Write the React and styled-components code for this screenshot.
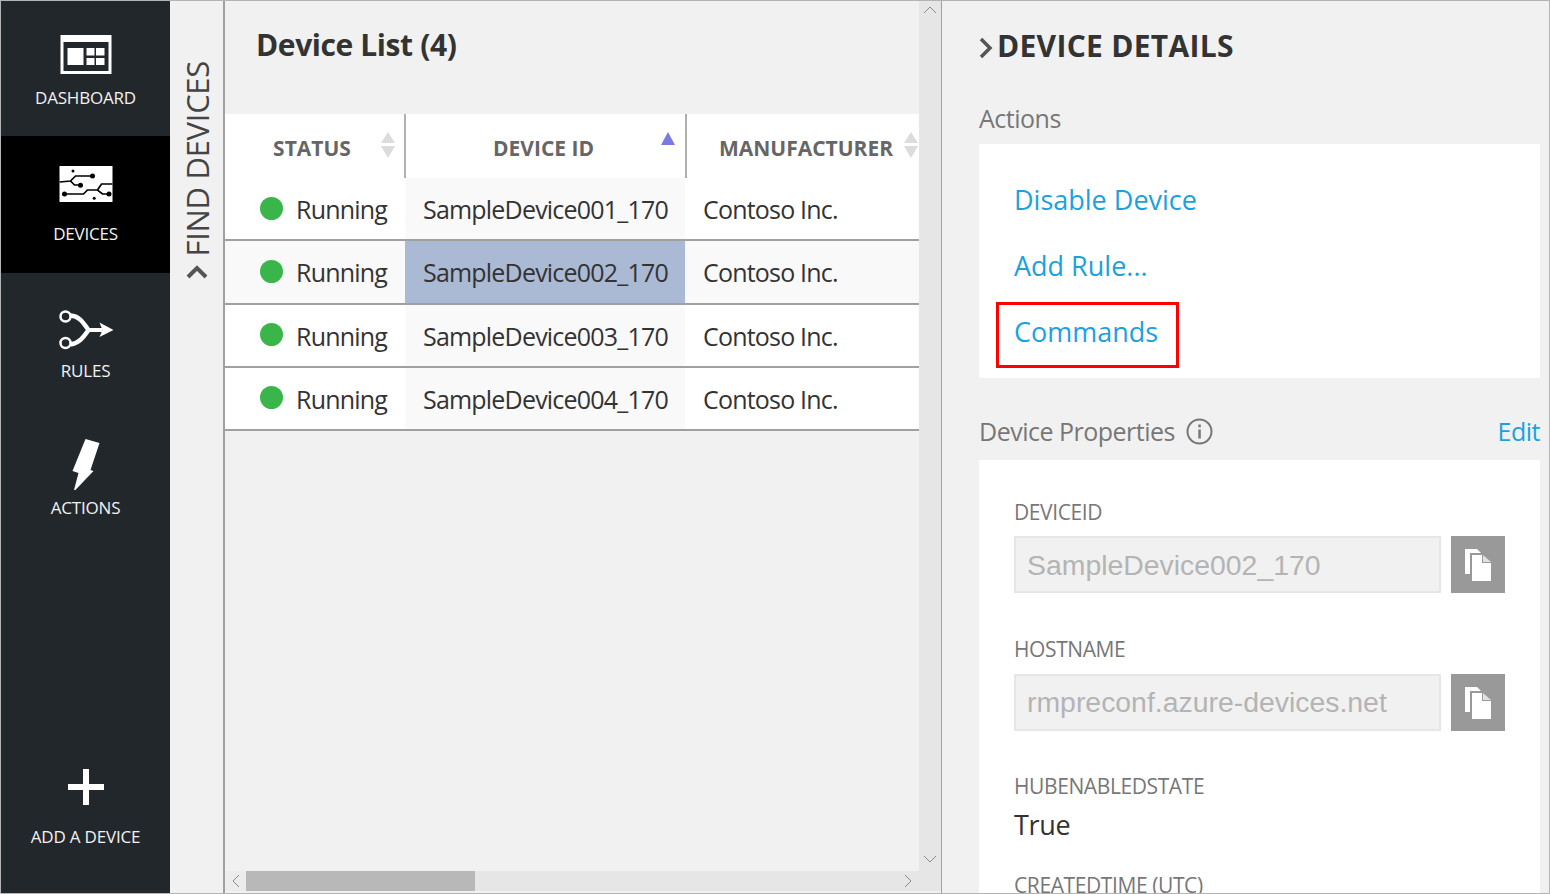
import React from 'react';
import styled, { createGlobalStyle } from 'styled-components';

const GlobalStyle = createGlobalStyle`
  html, body {
    margin: 0;
    padding: 0;
    background: #fff;
  }
  * {
    box-sizing: border-box;
  }
`;

const devices = ['001', '002', '003', '004'];

const DashboardIcon = () => (
  <NavSvg viewBox="55.5 20 60 60">
    <rect x="60" y="35" width="51" height="39" fill="#fff" />
    <rect x="63" y="42" width="45" height="29" fill="#22272b" />
    <rect x="67" y="48" width="16" height="17" fill="#fff" />
    <rect x="86" y="48" width="8" height="7.5" fill="#fff" />
    <rect x="95.5" y="48" width="8.5" height="7.5" fill="#fff" />
    <rect x="86" y="58" width="8" height="7" fill="#fff" />
    <rect x="95.5" y="58" width="8.5" height="7" fill="#fff" />
  </NavSvg>
);

const DevicesIcon = () => (
  <NavSvg viewBox="55.5 156 60 60">
    <rect x="59" y="166" width="53" height="36" fill="#fff" />
    <g fill="none" stroke="#000" strokeWidth="1.7">
      <path d="M92 176H75L70 181L59 182" />
      <path d="M70 181L74 185H80" />
      <path d="M64 194H83L87 190H97L102 194H109" />
      <path d="M97 190L101 184H112" />
    </g>
    <g fill="#000">
      <circle cx="72.500" cy="171" r="1.500" />
      <circle cx="92" cy="176" r="2.500" />
      <circle cx="80" cy="185.300" r="2.500" />
      <circle cx="64" cy="194" r="2.500" />
      <circle cx="108.500" cy="194" r="2.500" />
      <circle cx="93.700" cy="198.300" r="1.500" />
    </g>
  </NavSvg>
);

const RulesIcon = () => (
  <NavSvg viewBox="55.5 293 60 60">
    <g fill="none" stroke="#fff">
      <circle cx="65" cy="316.500" r="5" strokeWidth="2.500" />
      <circle cx="65" cy="343" r="5" strokeWidth="2.500" />
      <path d="M70 315.500C79 316 83 323 88 330C83 337 79 343 70 344.500" strokeWidth="4.500" />
      <path d="M86 330H102" strokeWidth="4" />
    </g>
    <path d="M99 322.500L113 330L99 337L102 330Z" fill="#fff" />
  </NavSvg>
);

const ActionsIcon = () => (
  <NavSvg viewBox="55.5 430 60 60">
    <path d="M85 439L99 443L90 470L93 471L73 492L78 473L72 471Z" fill="#fff" />
  </NavSvg>
);

const PlusIcon = () => (
  <PlusSvg viewBox="0 0 36 36">
    <path d="M15 0H21V15H36V21H21V36H15V21H0V15H15Z" fill="#fff" />
  </PlusSvg>
);

const CopyIcon = () => (
  <svg width="26" height="32" viewBox="0 0 26 32">
    <path d="M0 0H12L16 4H5V25H0Z" fill="#fff" />
    <path d="M7 6H17V14H26V32H7Z" fill="#fff" />
    <path d="M18 6L26 13H18Z" fill="#fff" opacity="0.7" />
  </svg>
);

const InfoIcon = () => (
  <svg width="27" height="27" viewBox="0 0 27 27">
    <circle cx="13.500" cy="13.500" r="12" fill="none" stroke="#777" strokeWidth="2" />
    <rect x="12.300" y="11.500" width="2.500" height="9" fill="#777" />
    <rect x="12.300" y="6.500" width="2.500" height="2.800" fill="#777" />
  </svg>
);

const SortArrows = ({ active, right }) =>
  active ? (
    <SortSvg $right={right} $top={18} viewBox="0 0 16 28" width="16" height="28">
      <path d="M8 0L15 13H1Z" fill="#7a7ae0" />
    </SortSvg>
  ) : (
    <SortSvg $right={right} $top={17} viewBox="0 0 16 28" width="16" height="28">
      <path d="M8 1L15 12H1Z" fill="#dcdcdc" />
      <path d="M8 27L15 15H1Z" fill="#dcdcdc" />
    </SortSvg>
  );

const Chevron = ({ d, w, h }) => (
  <svg width={w} height={h} viewBox={`0 0 ${w} ${h}`}>
    <path d={d} fill="none" stroke="#8a8a8a" strokeWidth="1" />
  </svg>
);

const App = () => {
  return (
    <Page>
      <GlobalStyle />
      <Sidebar>
        <NavItem>
          <DashboardIcon />
          <NavLabel>DASHBOARD</NavLabel>
        </NavItem>
        <NavItem $active>
          <DevicesIcon />
          <NavLabel>DEVICES</NavLabel>
        </NavItem>
        <NavItem>
          <RulesIcon />
          <NavLabel>RULES</NavLabel>
        </NavItem>
        <NavItem>
          <ActionsIcon />
          <NavLabel>ACTIONS</NavLabel>
        </NavItem>
        <AddDevice>
          <PlusIcon />
          <NavLabel>ADD A DEVICE</NavLabel>
        </AddDevice>
      </Sidebar>

      <FindPanel>
        <FindLabel>FIND DEVICES</FindLabel>
        <svg width="22" height="14" viewBox="0 0 22 14">
          <path d="M2 12L11 3L20 12" fill="none" stroke="#555" strokeWidth="4" />
        </svg>
      </FindPanel>

      <ListColumn>
        <ListBody>
          <ListTitle>Device List (4)</ListTitle>
          <HeaderRow>
            <HeaderCell $width={181} $shift={-5} $divider>
              STATUS
              <SortArrows right={8} />
            </HeaderCell>
            <HeaderCell $width={281} $shift={-4} $divider>
              DEVICE ID
              <SortArrows active right={9} />
            </HeaderCell>
            <HeaderCell $width={232} $shift={6}>
              MANUFACTURER
              <SortArrows right={0} />
            </HeaderCell>
          </HeaderRow>
          {devices.map((id, i) => (
            <Row key={id} $alt={i === 1}>
              <StatusCell>
                <Dot />
                Running
              </StatusCell>
              <IdCell $selected={i === 1}>SampleDevice{id}_170</IdCell>
              <MakerCell>Contoso Inc.</MakerCell>
            </Row>
          ))}
        </ListBody>
        <HScroll>
          <HButton>
            <Chevron w={8} h={14} d="M7 1L1 7L7 13" />
          </HButton>
          <HThumb />
          <HButtonEnd>
            <Chevron w={8} h={14} d="M1 1L7 7L1 13" />
          </HButtonEnd>
        </HScroll>
      </ListColumn>

      <VScroll>
        <Chevron w={14} h={8} d="M1 7L7 1L13 7" />
        <Chevron w={14} h={8} d="M1 1L7 7L13 1" />
      </VScroll>

      <Details>
        <DetailsTitle>
          <svg width="14" height="22" viewBox="0 0 14 22">
            <path d="M2 2L11 11L2 20" fill="none" stroke="#555" strokeWidth="3.500" />
          </svg>
          DEVICE DETAILS
        </DetailsTitle>
        <SectionLabel>Actions</SectionLabel>
        <ActionsCard>
          <ActionLink>Disable Device</ActionLink>
          <ActionLink>Add Rule...</ActionLink>
          <HighlightLink>Commands</HighlightLink>
        </ActionsCard>
        <PropsHead>
          <SectionInline>
            Device Properties
            <InfoIcon />
          </SectionInline>
          <EditLink>Edit</EditLink>
        </PropsHead>
        <PropsCard>
          <FieldLabel>DEVICEID</FieldLabel>
          <FieldRow>
            <FieldValue>SampleDevice002_170</FieldValue>
            <CopyButton>
              <CopyIcon />
            </CopyButton>
          </FieldRow>
          <FieldLabel>HOSTNAME</FieldLabel>
          <FieldRow $low>
            <FieldValue $low>rmpreconf.azure-devices.net</FieldValue>
            <CopyButton>
              <CopyIcon />
            </CopyButton>
          </FieldRow>
          <FieldLabel>HUBENABLEDSTATE</FieldLabel>
          <PlainValue>True</PlainValue>
          <FieldLabel>CREATEDTIME (UTC)</FieldLabel>
        </PropsCard>
      </Details>
    </Page>
  );
};

export default App;

const sans = `'Open Sans', 'Noto Sans', sans-serif`;

const Page = styled.div`
  width: 1550px;
  height: 894px;
  display: flex;
  overflow: hidden;
  border: 1px solid #b4b4b4;
  background: #f1f1f1;
  font-family: ${sans};
  color: #333;
`;

const Sidebar = styled.nav`
  width: 169px;
  flex: none;
  background: #22272b;
  display: flex;
  flex-direction: column;
`;

const NavItem = styled.div`
  height: 137px;
  padding-top: 20px;
  display: flex;
  flex-direction: column;
  align-items: center;
  background: ${(p) => (p.$active ? '#000' : 'transparent')};
  &:first-child {
    height: 135px;
    padding-top: 19px;
  }
`;

const NavSvg = styled.svg`
  width: 60px;
  height: 60px;
  flex: none;
`;

const NavLabel = styled.div`
  margin-top: 6px;
  color: #f2f2f2;
  font-size: 17px;
  line-height: 24px;
  letter-spacing: -0.2px;
  white-space: nowrap;
`;

const AddDevice = styled.div`
  margin-top: auto;
  padding-bottom: 44px;
  display: flex;
  flex-direction: column;
  align-items: center;
`;

const PlusSvg = styled.svg`
  width: 36px;
  height: 36px;
  margin-bottom: 14px;
`;

const FindPanel = styled.div`
  width: 53px;
  flex: none;
  padding-top: 60px;
  display: flex;
  flex-direction: column;
  align-items: center;
  gap: 8px;
`;

const FindLabel = styled.div`
  writing-mode: vertical-rl;
  transform: rotate(180deg);
  font-size: 31px;
  line-height: 40px;
  color: #444;
  letter-spacing: -0.3px;
  white-space: nowrap;
`;

const ListColumn = styled.section`
  width: 696px;
  flex: none;
  border-left: 2px solid #a0a0a0;
  display: flex;
  flex-direction: column;
`;

const ListBody = styled.div`
  flex: 1;
  overflow: hidden;
`;

const ListTitle = styled.h1`
  margin: 0;
  height: 113px;
  padding: 23px 0 0 31px;
  font-size: 30px;
  line-height: 42px;
  font-weight: 700;
  letter-spacing: -0.4px;
  color: #333;
`;

const HeaderRow = styled.div`
  display: flex;
  height: 64px;
  background: #fff;
`;

const HeaderCell = styled.div`
  position: relative;
  width: ${(p) => p.$width}px;
  flex: none;
  display: flex;
  align-items: center;
  justify-content: center;
  padding-top: 3px;
  padding-left: ${(p) => (p.$shift > 0 ? p.$shift : 0)}px;
  padding-right: ${(p) => (p.$shift < 0 ? -p.$shift : 0)}px;
  border-right: ${(p) => (p.$divider ? '2px solid #b0b0b0' : 'none')};
  font-size: 21px;
  font-weight: 700;
  color: #666;
`;

const SortSvg = styled.svg`
  position: absolute;
  right: ${(p) => p.$right}px;
  top: ${(p) => p.$top}px;
`;

const Row = styled.div`
  display: flex;
  height: 63.250px;
  border-bottom: 2px solid #a0a0a0;
  background: ${(p) => (p.$alt ? '#f9f9f9' : '#fff')};
  font-size: 25px;
  letter-spacing: -0.8px;
  color: #333;
`;

const StatusCell = styled.div`
  width: 180px;
  flex: none;
  display: flex;
  align-items: center;
  padding: 1px 0 0 35px;
`;

const Dot = styled.span`
  width: 23px;
  height: 23px;
  margin: -2px 13px 0 0;
  border-radius: 50%;
  background: #39b54a;
`;

const IdCell = styled.div`
  width: 280px;
  flex: none;
  display: flex;
  align-items: center;
  padding: 1px 0 0 18px;
  background: ${(p) => (p.$selected ? '#aab9d4' : '#f9f9f9')};
`;

const MakerCell = styled.div`
  flex: 1;
  display: flex;
  align-items: center;
  padding: 1px 0 0 18px;
`;

const HScroll = styled.div`
  height: 20px;
  flex: none;
  margin-bottom: 2px;
  display: flex;
  background: #e6e6e6;
`;

const HButton = styled.div`
  width: 21px;
  display: flex;
  align-items: center;
  justify-content: center;
  background: #ececec;
`;

const HButtonEnd = styled(HButton)`
  margin-left: auto;
  width: 22px;
  background: transparent;
`;

const HThumb = styled.div`
  width: 229px;
  background: #b8b8b8;
`;

const VScroll = styled.div`
  width: 22px;
  flex: none;
  height: 890px;
  padding: 5px 0 28px;
  display: flex;
  flex-direction: column;
  align-items: center;
  justify-content: space-between;
  background: #e6e6e6;
`;

const Details = styled.aside`
  flex: 1;
  min-width: 0;
  border-left: 1px solid #a0a0a0;
  padding: 0 9px 0 37px;
  overflow: hidden;
`;

const DetailsTitle = styled.h2`
  margin: 0;
  height: 83px;
  padding-top: 24px;
  display: flex;
  align-items: flex-start;
  gap: 4px;
  font-size: 30px;
  line-height: 42px;
  font-weight: 700;
  letter-spacing: 0.3px;
  color: #333;
  white-space: nowrap;
  svg {
    margin-top: 12px;
  }
`;

const SectionLabel = styled.div`
  height: 60px;
  padding-top: 16px;
  font-size: 25px;
  line-height: 36px;
  letter-spacing: -0.5px;
  color: #777;
`;

const ActionsCard = styled.div`
  height: 234px;
  padding: 23px 0 0 35px;
  background: #fff;
`;

const ActionLink = styled.div`
  height: 66px;
  font-size: 27px;
  line-height: 66px;
  color: #1ba1dd;
`;

const HighlightLink = styled(ActionLink)`
  width: 183px;
  margin: 3px 0 0 -18px;
  padding-left: 15px;
  line-height: 54px;
  border: 3px solid #f00;
`;

const PropsHead = styled.div`
  height: 82px;
  padding-top: 34px;
  display: flex;
  justify-content: space-between;
  align-items: flex-start;
`;

const SectionInline = styled.div`
  display: flex;
  align-items: center;
  gap: 11px;
  height: 38px;
  font-size: 25px;
  letter-spacing: -0.5px;
  color: #777;
`;

const EditLink = styled.div`
  height: 38px;
  font-size: 25px;
  line-height: 38px;
  letter-spacing: -0.5px;
  color: #1ba1dd;
`;

const PropsCard = styled.div`
  height: 520px;
  padding: 37px 35px 0 35px;
  background: #fff;
`;

const FieldLabel = styled.div`
  height: 30px;
  font-size: 21px;
  line-height: 30px;
  letter-spacing: -0.4px;
  color: #777;
  white-space: nowrap;
`;

const FieldRow = styled.div`
  display: flex;
  gap: 10px;
  height: 57px;
  margin: ${(p) => (p.$low ? '10px 0 40px' : '9px 0 41px')};
`;

const FieldValue = styled.div`
  flex: 1;
  padding-left: 11px;
  border: 2px solid #e6e6e6;
  background: #f1f1f1;
  font-family: 'Liberation Sans', sans-serif;
  font-size: 28.400px;
  line-height: ${(p) => (p.$low ? 53 : 55)}px;
  color: #b4b4b4;
  white-space: nowrap;
`;

const CopyButton = styled.div`
  width: 54px;
  flex: none;
  display: flex;
  align-items: center;
  justify-content: center;
  background: #999;
`;

const PlainValue = styled.div`
  height: 69px;
  padding-top: 4px;
  font-size: 27px;
  line-height: 40px;
  letter-spacing: -0.3px;
  color: #333;
`;
